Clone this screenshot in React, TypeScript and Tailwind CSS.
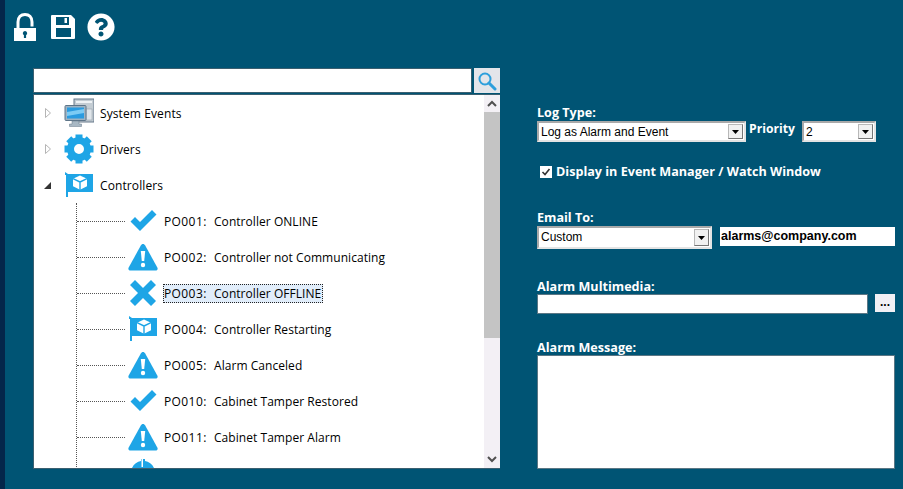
import { ReactNode } from 'react';
import { FaQuestionCircle } from 'react-icons/fa';

const BLUE = '#1ea5e6';

const LockIcon = () => (
  <svg width="24" height="28" viewBox="0 0 24 28" className="block">
    <path d="M4 15V9C4 4 7 1.500 11 1.500S18 4 18 9V13.500" fill="none" stroke="#fff" strokeWidth="3" />
    <path fillRule="evenodd" fill="#fff" d="M0 15h22v13H0zM11 18a2.200 2.200 0 0 0-1.100 4.100V25h2.200v-2.900A2.200 2.200 0 0 0 11 18z" />
  </svg>
);

const SaveIcon = () => (
  <svg width="25" height="24" viewBox="0 0 25 24" className="block">
    <path fillRule="evenodd" fill="#fff" d="M1 0h19l4 4v19a1 1 0 0 1-1 1H1a1 1 0 0 1-1-1V1a1 1 0 0 1 1-1zM5 2v8h13V2zM5 13v9h15v-9z" />
    <rect x="13.500" y="3" width="2.500" height="5" fill="#fff" />
  </svg>
);

const SystemIcon = () => (
  <svg width="30" height="30" viewBox="0 0 30 30" className="block">
    <rect x="10" y="1" width="20" height="23" fill="#c3ccd3" stroke="#66788a" />
    <rect x="12" y="3" width="16" height="2" fill="#eef2f5" />
    <rect x="22" y="11" width="6" height="11" fill="#dfe5ea" stroke="#8b98a3" strokeWidth="0.5" />
    <rect x="1" y="7.500" width="21" height="15" rx="1" fill="#9fb3c2" stroke="#5d7488" />
    <rect x="3" y="9.500" width="17" height="11" fill="#2a9be0" />
    <path d="M3 14l17-3v4L3 18z" fill="#7ccbf4" />
    <path d="M8 23h7v3h2.500v2.500h-12V26H8z" fill="#a8b8c4" stroke="#66788a" strokeWidth="0.5" />
  </svg>
);

const GearIcon = () => (
  <svg width="30" height="30" viewBox="0 0 30 30" className="block">
    {[0, 45, 90, 135, 180, 225, 270, 315].map(a => (
      <rect key={a} x="11.500" y="0.500" width="7" height="7" fill={BLUE} transform={`rotate(${a} 15 15)`} />
    ))}
    <circle cx="15" cy="15" r="8.500" fill="none" stroke={BLUE} strokeWidth="7" />
  </svg>
);

const BoardIcon = () => (
  <svg width="30" height="26" viewBox="0 0 30 26" className="block">
    <path d="M1 0l3 2h25v18H4v5H2V3H1z" fill={BLUE} />
    <path d="M16 3.500l7 3.200v7.600l-7 3.500-7-3.500V6.700z" fill="#fff" />
    <path d="M16 10l-7-3.300M16 10l7-3.300M16 10v8" stroke={BLUE} strokeWidth="1.400" fill="none" />
  </svg>
);

const CheckIcon = () => (
  <svg width="30" height="24" viewBox="0 0 30 24" className="block">
    <path d="M2.500 12.500L7 8l5 5L24 1l4.500 4.500L12 22z" fill={BLUE} />
  </svg>
);

const WarnIcon = () => (
  <svg width="30" height="28" viewBox="0 0 30 28" className="block">
    <path d="M15 1c1 0 1.700.6 2.200 1.500L29.300 24.500c.8 1.500 0 3-1.700 3H2.400c-1.700 0-2.500-1.500-1.700-3L12.800 2.500C13.300 1.600 14 1 15 1z" fill={BLUE} />
    <path d="M12.800 8h4.400l-1 10h-2.400z" fill="#fff" />
    <circle cx="15" cy="22" r="2.200" fill="#fff" />
  </svg>
);

const CrossIcon = () => (
  <svg width="26" height="26" viewBox="0 0 26 26" className="block">
    <path d="M5 0l8 8 8-8 5 5-8 8 8 8-5 5-8-8-8 8-5-5 8-8-8-8z" fill={BLUE} />
  </svg>
);

const PartialIcon = () => (
  <svg width="30" height="28" viewBox="0 0 30 28" className="block">
    <path d="M3 14C3 7 8 3 13 2V0h4v2c5 1 10 5 10 12z" fill={BLUE} />
    <rect x="13.500" y="0" width="1.500" height="8" fill="#fff" />
  </svg>
);

const ChevronUp = () => (
  <svg width="10" height="7" viewBox="0 0 10 7" className="block">
    <path d="M1 6l4-4 4 4" fill="none" stroke="#505050" strokeWidth="2" />
  </svg>
);

const ChevronDown = () => (
  <svg width="10" height="7" viewBox="0 0 10 7" className="block">
    <path d="M1 1l4 4 4-4" fill="none" stroke="#505050" strokeWidth="2" />
  </svg>
);

const TopRow = ({ open, icon, label }: { open: boolean; icon: ReactNode; label: string }) => (
  <div className="flex h-9 items-center">
    <div className="flex w-[30px] justify-end pr-[13px]">
      {open ? (
        <svg width="7" height="7" viewBox="0 0 7 7" className="block">
          <path d="M0 7h7V0z" fill="#333" />
        </svg>
      ) : (
        <svg width="6" height="10" viewBox="0 0 6 10" className="block">
          <path d="M.5.500l5 4.500-5 4.500z" fill="#fff" stroke="#b5b5b5" />
        </svg>
      )}
    </div>
    <div className="flex w-[36px] justify-start">{icon}</div>
    <span className="pt-[2px] tracking-[0.1px]">{label}</span>
  </div>
);

const ChildRow = ({ icon, code, text, selected }: { icon?: ReactNode; code?: string; text?: string; selected?: boolean }) => (
  <div className="flex h-9 items-center">
    <div className="h-0 w-[48px] border-t border-dotted border-[#555]" />
    <div className="ml-[3px] flex w-[30px] justify-center">{icon}</div>
    {code && (
      <span
        className={
          selected
            ? 'ml-[5px] flex border border-dotted border-[#222] bg-[#e1edfa] pr-px leading-[17px] tracking-[0.05px]'
            : 'ml-[5px] flex border border-transparent leading-[17px] tracking-[0.05px]'
        }
      >
        <span className="w-[50px] tracking-[0.4px]">{code}:</span>
        <span>{text}</span>
      </span>
    )}
  </div>
);

const Combo = ({ value, width, height }: { value: string; width: string; height: string }) => (
  <div className={`flex ${width} ${height} items-stretch border-2 border-[#a9a9a9] border-r-[#e4e4e4] border-b-[#e4e4e4] bg-white`}>
    <span className="flex-1 truncate pt-px pl-[2px] font-['Liberation_Sans',sans-serif] text-[12px] leading-[17px] font-normal text-black">{value}</span>
    <div className="m-px flex w-[15px] items-center justify-center border border-[#b8b8b8] border-r-[#777] border-b-[#777] bg-[#f1f1f1]">
      <svg width="7" height="4" viewBox="0 0 7 4" className="block">
        <path d="M0 0h7L3.500 4z" fill="#000" />
      </svg>
    </div>
  </div>
);

const Label = ({ children }: { children: ReactNode }) => (
  <div className="text-[12.6px] leading-[14px] font-bold text-white">{children}</div>
);

export default function App() {
  return (
    <div className="flex h-[489px] w-[903px] overflow-hidden bg-[#005474] font-['Open_Sans',sans-serif]">
      {/* edge of the window behind */}
      <div className="w-[5px] shrink-0 bg-[#04264a]" />

      <div className="flex flex-1 flex-col">
        {/* toolbar */}
        <div className="flex h-[68px] items-start pt-[13px] pl-[9px] text-white">
          <LockIcon />
          <div className="ml-[13px] pt-[2px]">
            <SaveIcon />
          </div>
          <div className="ml-[11px]">
            <FaQuestionCircle size={28} />
          </div>
        </div>

        <div className="flex flex-1 items-start pl-[28px]">
          {/* left: search and tree */}
          <div className="w-[467px]">
            <div className="flex h-[25px]">
              <div className="flex-1 border border-[#3b5f70] bg-white" />
              <div className="ml-[2px] flex w-[26px] items-center justify-center bg-[#e3e5ea]">
                <svg width="20" height="20" viewBox="0 0 20 20" className="block">
                  <circle cx="8" cy="8" r="5.500" fill="none" stroke="#2d9fdc" strokeWidth="2" />
                  <path d="M12 12l6 6" stroke="#2d9fdc" strokeWidth="3" strokeLinecap="round" />
                </svg>
              </div>
            </div>
            <div className="mt-px flex h-[375px] overflow-hidden border border-[#3b5f70] border-r-0 bg-white text-[12px] text-black">
              <div className="flex-1 overflow-hidden">
                <TopRow open={false} icon={<SystemIcon />} label="System Events" />
                <TopRow open={false} icon={<GearIcon />} label="Drivers" />
                <TopRow open icon={<BoardIcon />} label="Controllers" />
                <div className="ml-[42px] border-l border-dotted border-[#555]">
                  <ChildRow icon={<CheckIcon />} code="PO001" text="Controller ONLINE" />
                  <ChildRow icon={<WarnIcon />} code="PO002" text="Controller not Communicating" />
                  <ChildRow icon={<CrossIcon />} code="PO003" text="Controller OFFLINE" selected />
                  <ChildRow icon={<BoardIcon />} code="PO004" text="Controller Restarting" />
                  <ChildRow icon={<WarnIcon />} code="PO005" text="Alarm Canceled" />
                  <ChildRow icon={<CheckIcon />} code="PO010" text="Cabinet Tamper Restored" />
                  <ChildRow icon={<WarnIcon />} code="PO011" text="Cabinet Tamper Alarm" />
                  <ChildRow icon={<PartialIcon />} />
                </div>
              </div>
              <div className="flex w-[16px] flex-col bg-[#f3f0f5]">
                <div className="flex h-[17px] items-center justify-center">
                  <ChevronUp />
                </div>
                <div className="h-[226px] bg-[#c4c4c4]" />
                <div className="flex-1" />
                <div className="flex h-[17px] items-center justify-center">
                  <ChevronDown />
                </div>
              </div>
            </div>
          </div>

          {/* right: event settings */}
          <div className="ml-[37px] w-[358px] pt-[38px]">
            <Label>Log Type:</Label>
            <div className="mt-px flex items-start">
              <Combo value="Log as Alarm and Event" width="w-[209px]" height="h-[21px]" />
              <div className="ml-[3px] pt-px text-[12.2px] leading-[14px] font-bold text-white">Priority</div>
              <div className="ml-[7px]">
                <Combo value="2" width="w-[74px]" height="h-[21px]" />
              </div>
            </div>

            <div className="mt-[23px] ml-[3px] flex items-center">
              <div className="flex h-[12px] w-[12px] items-center justify-center bg-white">
                <svg width="10" height="10" viewBox="0 0 10 10" className="block">
                  <path d="M1.500 5l2.500 2.500L8.500 2" fill="none" stroke="#333" strokeWidth="1.600" />
                </svg>
              </div>
              <span className="ml-[4px] text-[12.6px] leading-[14px] font-bold text-white">Display in Event Manager / Watch Window</span>
            </div>

            <div className="mt-[32px]">
              <Label>Email To:</Label>
            </div>
            <div className="mt-px flex items-start">
              <Combo value="Custom" width="w-[175px]" height="h-[23px]" />
              <div className="mt-px ml-[8px] h-[19px] w-[175px] bg-white pt-px pl-[1px] font-['Liberation_Sans',sans-serif] text-[12.5px] leading-[17px] font-bold text-black">
                alarms@company.com
              </div>
            </div>

            <div className="mt-[31px]">
              <Label>Alarm Multimedia:</Label>
            </div>
            <div className="flex items-start">
              <div className="h-[20px] w-[331px] border border-[#5a7684] bg-white" />
              <div className="ml-[7px] flex h-[18px] w-[20px] items-center justify-center bg-[#f1f0f5] pb-[3px] font-['Liberation_Sans',sans-serif] text-[12px] leading-[14px] font-bold text-black">
                ...
              </div>
            </div>

            <div className="mt-[27px]">
              <Label>Alarm Message:</Label>
            </div>
            <div className="h-[114px] w-[358px] border border-[#5a7684] bg-white" />
          </div>
        </div>
      </div>
    </div>
  );
}
